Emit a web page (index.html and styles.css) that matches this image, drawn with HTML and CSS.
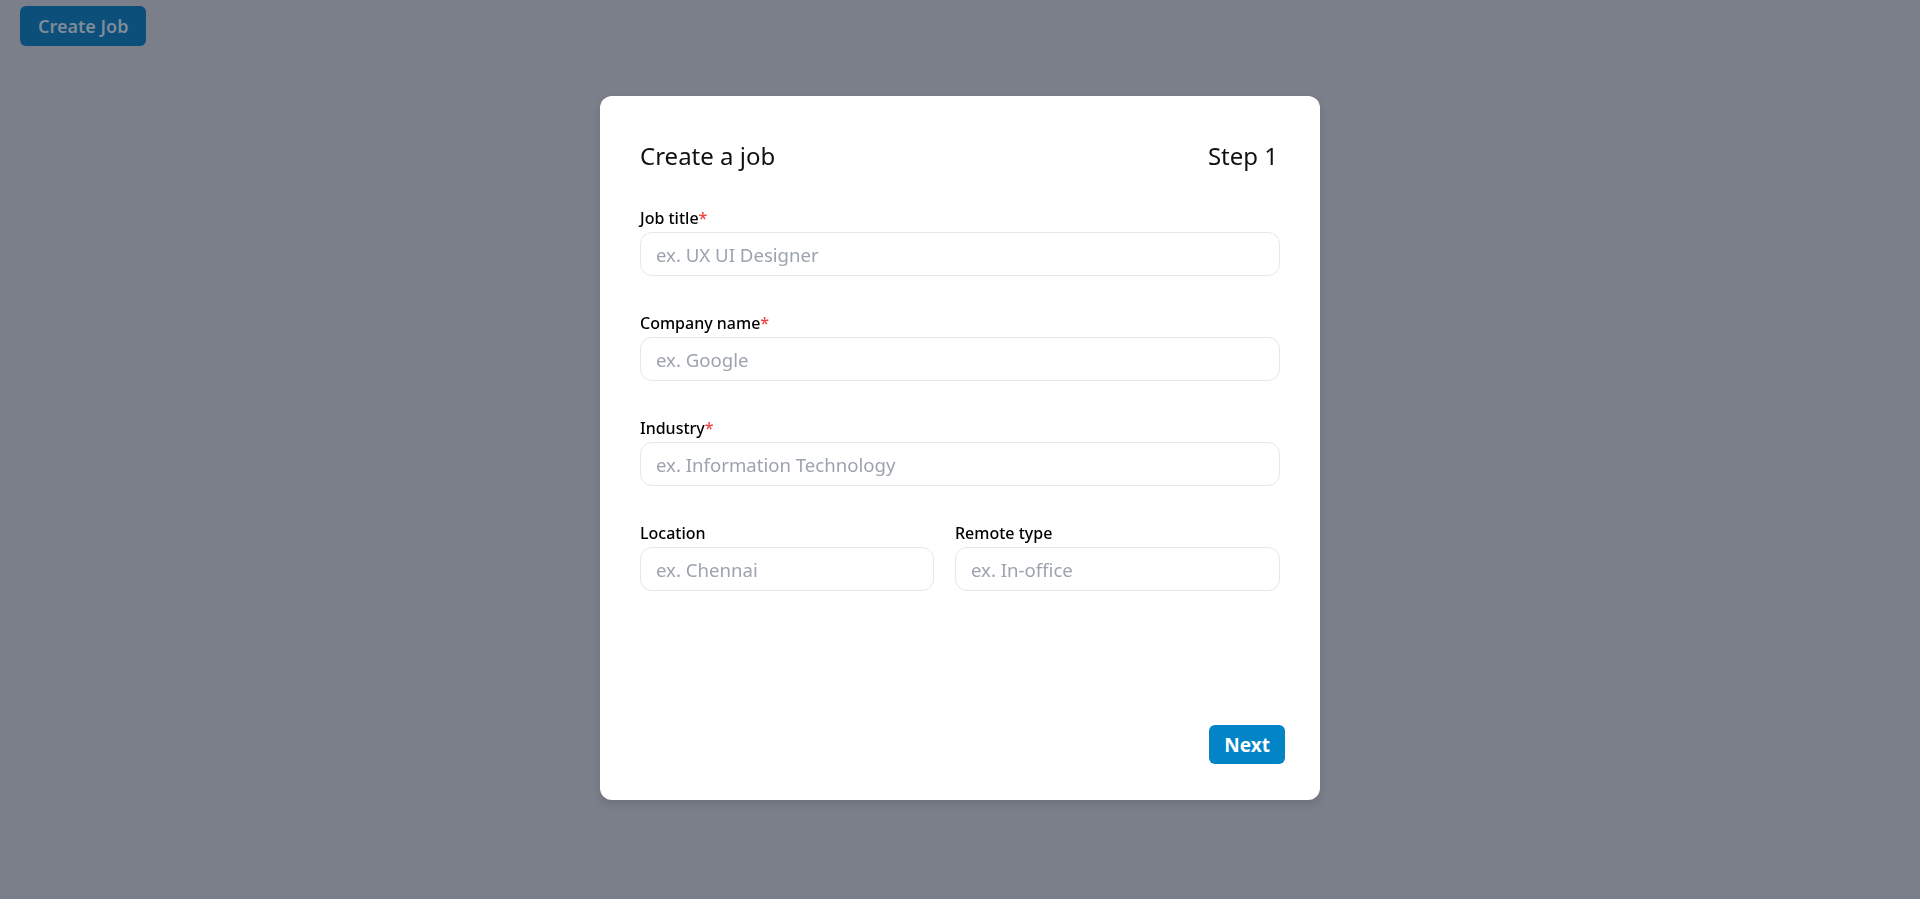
FILE: index.html
```html
<!DOCTYPE html>
<html lang="en">
<head>
<meta charset="utf-8">
<title>Create Job</title>
<link rel="stylesheet" href="styles.css">
</head>
<body>
<div class="page">
  <button class="open-btn" type="button">Create Job</button>
</div>
<div class="overlay">
  <div class="modal">
    <div class="content">
      <div class="modal-head">
        <h2 class="title">Create a job</h2>
        <span class="step">Step 1</span>
      </div>
      <div class="fields">
        <div class="field">
          <label class="label">Job title<span class="req">*</span></label>
          <input class="input" type="text" placeholder="ex. UX UI Designer">
        </div>
        <div class="field">
          <label class="label">Company name<span class="req">*</span></label>
          <input class="input" type="text" placeholder="ex. Google">
        </div>
        <div class="field">
          <label class="label">Industry<span class="req">*</span></label>
          <input class="input" type="text" placeholder="ex. Information Technology">
        </div>
        <div class="row">
          <div class="field">
            <label class="label">Location</label>
            <input class="input" type="text" placeholder="ex. Chennai">
          </div>
          <div class="field">
            <label class="label">Remote type</label>
            <input class="input" type="text" placeholder="ex. In-office">
          </div>
        </div>
      </div>
    </div>
    <div class="footer">
      <button class="next-btn" type="button">Next</button>
    </div>
  </div>
</div>
</body>
</html>
```

FILE: styles.css
```css
* { box-sizing: border-box; }
html, body { margin: 0; padding: 0; }
body {
  background: #7b7f8a;
  font-family: "Noto Sans", "Open Sans", sans-serif;
  color: #111;
  height: 899px;
  overflow: hidden;
}
.page {
  padding: 6px 20px;
}
.open-btn {
  display: inline-flex;
  align-items: center;
  height: 40px;
  padding: 0 18px;
  border: none;
  border-radius: 6px;
  background: #0b4f7a;
  color: #7f8b98;
  font-family: inherit;
  font-size: 18px;
  font-weight: 600;
}
.overlay {
  position: fixed;
  inset: 0;
  display: flex;
  align-items: flex-start;
  justify-content: center;
  padding-top: 96px;
}
.modal {
  width: 720px;
  height: 704px;
  background: #fff;
  border-radius: 12px;
  box-shadow: 0 4px 10px rgba(0,0,0,0.12);
  padding: 44px 35px 36px 40px;
  display: flex;
  flex-direction: column;
}
.content {
  margin-right: 5px;
}
.modal-head {
  display: flex;
  justify-content: space-between;
  align-items: center;
  height: 32px;
  margin-bottom: 34px;
}
.title {
  margin: 0;
  font-size: 24px;
  font-weight: 400;
  line-height: 32px;
  color: #111;
}
.step {
  font-size: 24px;
  line-height: 32px;
  color: #111;
  margin-right: 2px;
}
.fields {
  display: flex;
  flex-direction: column;
  gap: 35px;
}
.field {
  display: flex;
  flex-direction: column;
  gap: 2px;
}
.label {
  font-size: 16px;
  line-height: 24px;
  font-weight: 500;
  color: #000;
}
.req { color: #ef4444; }
.input {
  height: 44px;
  width: 100%;
  border: 1px solid #e5e7eb;
  border-radius: 12px;
  padding: 0 15px;
  font-family: inherit;
  font-size: 18.6px;
  color: #111;
  background: #fff;
  outline: none;
}
.input::placeholder { color: #9ca3af; }
.row {
  display: grid;
  grid-template-columns: 294px 325px;
  column-gap: 21px;
}
.footer {
  margin-top: auto;
  display: flex;
  justify-content: flex-end;
}
.next-btn {
  height: 39px;
  padding: 0 15px;
  min-width: 74px;
  border: none;
  border-radius: 6px;
  background: #0284c7;
  color: #fff;
  font-family: inherit;
  font-size: 19px;
  font-weight: 700;
}
```
